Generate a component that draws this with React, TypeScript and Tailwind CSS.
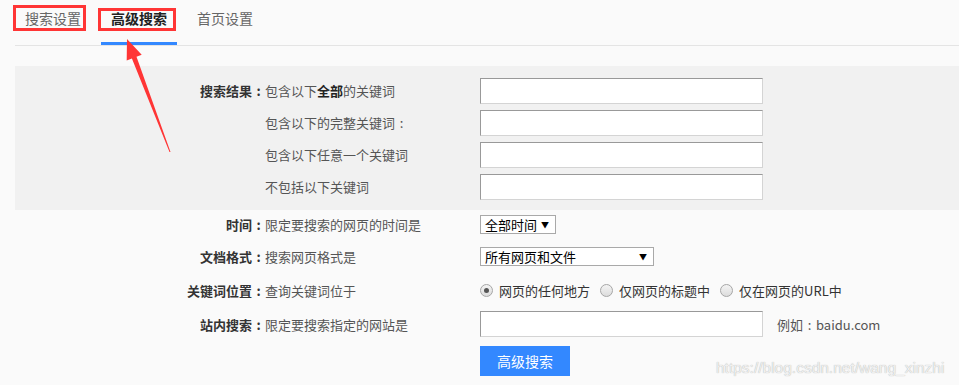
import React from 'react'

const font = "font-['Noto_Sans_CJK_SC','Noto_Sans',sans-serif]"

// full-width colon, centred in its cell like the original font draws it
function Colon() {
  return <span className="inline-block w-[13px] text-center">:</span>
}

function TextInput() {
  return (
    <div className="h-[26px] w-[283px] border border-t-[#999] border-l-[#999] border-r-[#d4d4d4] border-b-[#d4d4d4] bg-white" />
  )
}

function Select({ label, width }: { label: string; width: string }) {
  return (
    <div
      className={`flex h-[19px] ${width} items-center justify-between border border-[#a9a9a9] bg-white pl-[4px] pr-[6px] text-[13px] leading-[17px] text-black`}
    >
      <span>{label}</span>
      <span className="text-[8px] leading-none">▼</span>
    </div>
  )
}

function Radio({ checked, label }: { checked?: boolean; label: string }) {
  return (
    <div className="flex items-center">
      <span className="flex h-[13px] w-[13px] items-center justify-center rounded-full border border-[#a6a6a6] bg-gradient-to-b from-[#f4f4f4] to-[#dcdcdc]">
        {checked && <span className="h-[5px] w-[5px] rounded-full bg-[#555]" />}
      </span>
      <span className="ml-[6px] text-[#333]">{label}</span>
    </div>
  )
}

function PanelRow({ label, children, input }: { label?: string; children: React.ReactNode; input: React.ReactNode }) {
  return (
    <div className="flex h-[26px] items-center">
      <div className="w-[250px] -translate-y-[1px] text-right font-bold text-[#333]">
        {label && (
          <>
            {label}
            <Colon />
          </>
        )}
      </div>
      <div className="w-[215px] -translate-y-[1px] text-[#555]">{children}</div>
      {input}
    </div>
  )
}

function Row({ label, desc, children, className }: { label: string; desc: string; children: React.ReactNode; className: string }) {
  return (
    <div className={`flex items-center ${className}`}>
      <div className="w-[250px] text-right font-bold text-[#333]">
        {label}
        <Colon />
      </div>
      <div className="w-[215px] text-[#555]">{desc}</div>
      {children}
    </div>
  )
}

export default function App() {
  return (
    <div className={`relative h-[385px] w-full overflow-hidden bg-[#fafafa] text-[13px] leading-[19px] ${font}`}>
      {/* tabs */}
      <div className="ml-[15px] flex h-[46px] gap-[10px] border-b border-[#e4e4e4] text-[14px]">
        <div className="h-[45px] border-b-2 border-transparent px-[10px] pt-[8px] leading-[20px] text-[#666]">搜索设置</div>
        <div className="h-[45px] border-b-[3px] border-[#3388ff] px-[10px] pt-[8px] font-bold leading-[20px] text-[#222]">高级搜索</div>
        <div className="h-[45px] border-b-2 border-transparent px-[10px] pt-[8px] leading-[20px] text-[#666]">首页设置</div>
      </div>

      {/* keyword panel */}
      <div className="mt-[20px] ml-[15px] flex flex-col gap-[6px] bg-[#f1f1f1] pt-[12px] pb-[10px]">
        <PanelRow label="搜索结果" input={<TextInput />}>
          包含以下<b className="text-[#222]">全部</b>的关键词
        </PanelRow>
        <PanelRow input={<TextInput />}>
          包含以下的完整关键词<Colon />
        </PanelRow>
        <PanelRow input={<TextInput />}>包含以下任意一个关键词</PanelRow>
        <PanelRow input={<TextInput />}>不包括以下关键词</PanelRow>
      </div>

      <div className="ml-[15px] flex flex-col">
        <Row className="mt-[5px] h-[19px]" label="时间" desc="限定要搜索的网页的时间是">
          <Select label="全部时间" width="w-[76px]" />
        </Row>
        <Row className="mt-[13px] h-[19px]" label="文档格式" desc="搜索网页格式是">
          <Select label="所有网页和文件" width="w-[174px]" />
        </Row>
        <Row className="mt-[15px] h-[19px]" label="关键词位置" desc="查询关键词位于">
          <div className="flex items-center gap-[10px]">
            <Radio checked label="网页的任何地方" />
            <Radio label="仅网页的标题中" />
            <Radio label="仅在网页的URL中" />
          </div>
        </Row>
        <Row className="mt-[11px] h-[26px]" label="站内搜索" desc="限定要搜索指定的网站是">
          <TextInput />
          <span className="ml-[14px] text-[#555]">
            例如<Colon />baidu.com
          </span>
        </Row>
        <div className="mt-[9px] ml-[465px]">
          <button className="h-[30px] w-[90px] bg-[#3388ff] text-[14px] text-white">高级搜索</button>
        </div>
      </div>

      {/* watermark */}
      <div className="absolute left-[716px] top-[358px] font-['Liberation_Sans',sans-serif] text-[15.5px] text-[#f0f0f0] [text-shadow:0_0_1px_rgba(0,0,0,0.35)]">
        https://blog.csdn.net/wang_xinzhi
      </div>

      {/* annotations */}
      <div className="pointer-events-none absolute left-[13px] top-[5px] h-[26px] w-[73px] border-[3px] border-[#ff3535]" />
      <div className="pointer-events-none absolute left-[98px] top-[8px] h-[23px] w-[78px] border-[3px] border-[#ff3535]" />
      <svg className="pointer-events-none absolute left-0 top-0" width="959" height="385">
        <polygon
          points="127,39 141.7,54.8 136.5,56.8 170.5,152 169.5,152 131.9,58.6 126.7,60.6"
          fill="#ff3535"
        />
      </svg>
    </div>
  )
}
